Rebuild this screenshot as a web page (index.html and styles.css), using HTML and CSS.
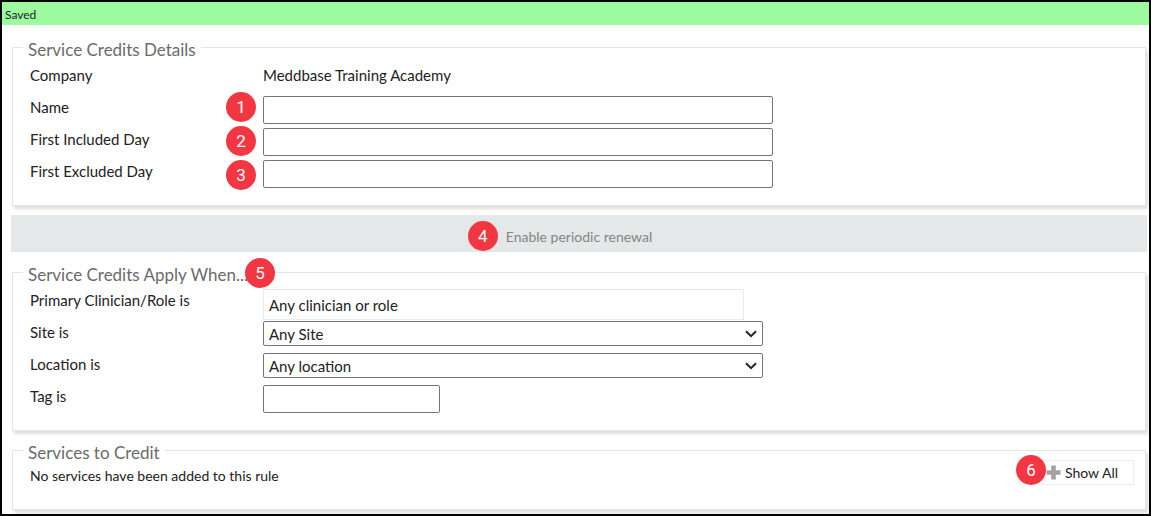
FILE: index.html
```html
<!DOCTYPE html>
<html lang="en">
<head>
  <meta charset="UTF-8" />
  <meta name="viewport" content="width=device-width, initial-scale=1.0"/>
  <title>Service Credits</title>
  <link rel="stylesheet" href="styles.css">
</head>
<body>

<div class="status" role="status">Saved</div>

<form class="rule-form">
  <fieldset class="panel">
    <legend>Service Credits Details</legend>
    <div class="row">
      <span class="caption">Company</span>
      <span class="caption">Meddbase Training Academy</span>
    </div>
    <div class="row">
      <label class="caption" for="name">Name</label>
      <input class="wide" type="text" id="name" />
    </div>
    <div class="row">
      <label class="caption" for="first-included">First Included Day</label>
      <input class="wide" type="text" id="first-included" />
    </div>
    <div class="row">
      <label class="caption" for="first-excluded">First Excluded Day</label>
      <input class="wide" type="text" id="first-excluded" />
    </div>
    <div class="markers">
      <span class="badge">1</span>
      <span class="badge">2</span>
      <span class="badge">3</span>
    </div>
  </fieldset>

  <div class="renewal">
    <button type="button" class="renewal-button">Enable periodic renewal<span class="badge">4</span></button>
  </div>

  <fieldset class="panel">
    <legend>Service Credits Apply When...<span class="badge">5</span></legend>
    <div class="row">
      <label class="caption" for="clinician">Primary Clinician/Role is</label>
      <input class="clinician" type="text" id="clinician" value="Any clinician or role" />
    </div>
    <div class="row">
      <label class="caption" for="site">Site is</label>
      <div class="select">
        <select id="site"><option>Any Site</option></select>
        <svg viewBox="0 0 12 8" aria-hidden="true"><path d="M1 1.2L6 6.2L11 1.2"/></svg>
      </div>
    </div>
    <div class="row">
      <label class="caption" for="location">Location is</label>
      <div class="select">
        <select id="location"><option>Any location</option></select>
        <svg viewBox="0 0 12 8" aria-hidden="true"><path d="M1 1.2L6 6.2L11 1.2"/></svg>
      </div>
    </div>
    <div class="row">
      <label class="caption" for="tag">Tag is</label>
      <input class="tag" type="text" id="tag" />
    </div>
  </fieldset>

  <fieldset class="panel services">
    <legend>Services to Credit</legend>
    <div class="services-row">
      <p>No services have been added to this rule</p>
      <button type="button" class="show-all">
        <svg viewBox="0 0 16 16" aria-hidden="true"><path d="M5.5 0.5h5v5h5v5h-5v5h-5v-5h-5v-5h5z"/></svg>
        Show All
        <span class="badge">6</span>
      </button>
    </div>
  </fieldset>
</form>

</body>
</html>
```

FILE: styles.css
```css
* {
  box-sizing: border-box;
}
body {
  margin: 0;
  min-height: 100vh;
  border: 2px solid #000;
  background: #fff;
  color: #222;
  font-family: Lato, Calibri, sans-serif;
  font-size: 15px;
}
.status {
  padding: 2px 3px 0;
  background: #9cfb9f;
  font-size: 12px;
  line-height: 21px;
}
.rule-form {
  padding: 9px 3px 0 10px;
}
.panel {
  position: relative;
  margin: 0;
  padding: 4px 11px 13px 17px;
  min-width: 0;
  border: 1px solid #e5e5e1;
  box-shadow: 2px 3px 3px #dededb;
}
legend {
  position: relative;
  margin-left: -7px;
  padding: 6px 5px 0;
  color: #6b6b6b;
  font-size: 17px;
  line-height: 20px;
}
.row {
  display: grid;
  grid-template-columns: 233px 1fr;
  align-items: start;
  height: 32px;
}
.caption {
  line-height: 22px;
}
input,
select {
  padding: 0 5px;
  border: 1px solid #767676;
  border-radius: 2px;
  background: #fff;
  color: #222;
  font: inherit;
}
input {
  height: 28px;
}
.wide {
  width: 100%;
  max-width: 510px;
}
.clinician {
  width: 100%;
  max-width: 481px;
  height: 31px;
  border-color: #e4ecec;
  border-radius: 0;
}
.tag {
  width: 177px;
}
.select {
  position: relative;
  width: 100%;
  max-width: 500px;
}
.select select {
  display: block;
  width: 100%;
  height: 25px;
  appearance: none;
}
.select svg {
  position: absolute;
  top: 9px;
  right: 6px;
  width: 12px;
  height: 8px;
  fill: none;
  stroke: #222;
  stroke-width: 2;
  pointer-events: none;
}
.badge {
  display: block;
  width: 30px;
  height: 30px;
  border-radius: 50%;
  background: #f23742;
  color: #fff;
  font-family: Roboto, sans-serif;
  font-size: 17px;
  line-height: 30px;
  text-align: center;
}
.markers {
  position: absolute;
  top: 32px;
  left: 213px;
  display: flex;
  flex-direction: column;
  gap: 4px;
}
legend .badge {
  position: absolute;
  top: 0;
  left: 100%;
  margin: -1px 0 0 -8px;
}
.renewal {
  display: flex;
  justify-content: center;
  margin: 9px -1px 7px;
  padding: 6px 0 1px;
  background: #e4e8e8;
}
.renewal-button {
  position: relative;
  height: 30px;
  padding: 0;
  border: none;
  background: none;
  color: #858585;
  font: inherit;
  font-size: 14px;
}
.renewal-button .badge {
  position: absolute;
  top: 0;
  right: 100%;
  margin-right: 8px;
}
.services {
  margin-top: 6px;
  padding-top: 0;
  padding-bottom: 21px;
}
.services-row {
  display: flex;
  justify-content: space-between;
  align-items: flex-start;
  font-size: 14px;
  line-height: 25px;
}
.services-row p {
  margin: 0;
}
.show-all {
  position: relative;
  display: flex;
  align-items: center;
  gap: 4px;
  height: 25px;
  margin-top: -3px;
  margin-bottom: 3px;
  padding: 0 15px 0 3px;
  border: 1px solid #ededed;
  background: #fff;
  color: #222;
  font: inherit;
}
.show-all svg {
  width: 15px;
  height: 15px;
  fill: #a3a3a3;
}
.show-all .badge {
  position: absolute;
  top: 0;
  right: 100%;
  margin: -6px -3px 0 0;
}
```
